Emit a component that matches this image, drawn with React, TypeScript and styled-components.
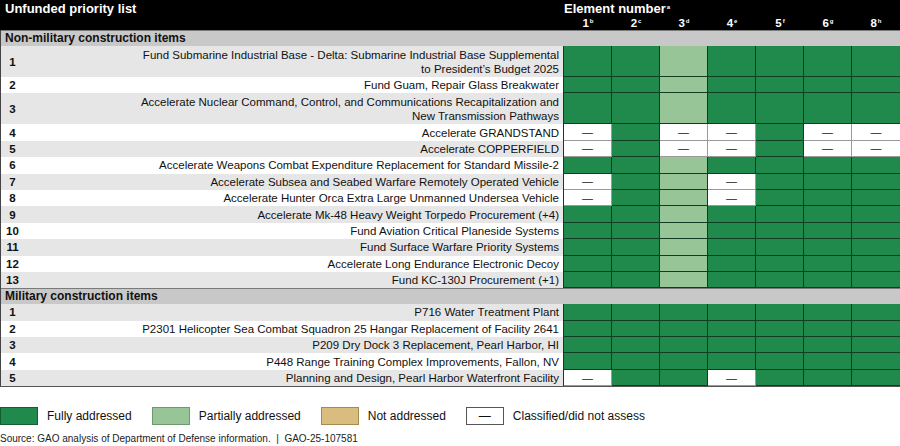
import React from 'react';
import styled, { createGlobalStyle } from 'styled-components';

const Global = createGlobalStyle`
  html, body { margin: 0; padding: 0; background: #fff; }
  body { font-family: "Liberation Sans", Arial, sans-serif; color: #111; }
`;

type Status = 'F' | 'P' | 'N' | 'C';

const FILL: Record<Status, string> = {
  F: '#1f8a4c',
  P: '#98c598',
  N: '#d9bd7f',
  C: '#ffffff',
};
const EDGE: Record<Status, string> = {
  F: '#0f3d22',
  P: '#0f3d22',
  N: '#7a6535',
  C: '#9a9a9a',
};

interface Item {
  n: number;
  text: React.ReactNode;
  tall?: boolean;
  s: string;
}

const nonMil: Item[] = [
  { n: 1, tall: true, s: 'FFPFFFF', text: <>Fund Submarine Industrial Base - Delta: Submarine Industrial Base Supplemental<br />to President’s Budget 2025</> },
  { n: 2, s: 'FFPFFFF', text: 'Fund Guam, Repair Glass Breakwater' },
  { n: 3, tall: true, s: 'FFPFFFF', text: <>Accelerate Nuclear Command, Control, and Communications Recapitalization and<br />New Transmission Pathways</> },
  { n: 4, s: 'CFCCFCC', text: 'Accelerate GRANDSTAND' },
  { n: 5, s: 'CFCCFCC', text: 'Accelerate COPPERFIELD' },
  { n: 6, s: 'FFPFFFF', text: 'Accelerate Weapons Combat Expenditure Replacement for Standard Missile-2' },
  { n: 7, s: 'CFPCFFF', text: 'Accelerate Subsea and Seabed Warfare Remotely Operated Vehicle' },
  { n: 8, s: 'CFPCFFF', text: 'Accelerate Hunter Orca Extra Large Unmanned Undersea Vehicle' },
  { n: 9, s: 'FFPFFFF', text: 'Accelerate Mk-48 Heavy Weight Torpedo Procurement (+4)' },
  { n: 10, s: 'FFPFFFF', text: 'Fund Aviation Critical Planeside Systems' },
  { n: 11, s: 'FFPFFFF', text: 'Fund Surface Warfare Priority Systems' },
  { n: 12, s: 'FFPFFFF', text: 'Accelerate Long Endurance Electronic Decoy' },
  { n: 13, s: 'FFPFFFF', text: 'Fund KC-130J Procurement (+1)' },
];

const mil: Item[] = [
  { n: 1, s: 'FFFFFFF', text: 'P716 Water Treatment Plant' },
  { n: 2, s: 'FFFFFFF', text: 'P2301 Helicopter Sea Combat Squadron 25 Hangar Replacement of Facility 2641' },
  { n: 3, s: 'FFFFFFF', text: 'P209 Dry Dock 3 Replacement, Pearl Harbor, HI' },
  { n: 4, s: 'FFFFFFF', text: 'P448 Range Training Complex Improvements, Fallon, NV' },
  { n: 5, s: 'CFFCFFF', text: 'Planning and Design, Pearl Harbor Waterfront Facility' },
];

const cols: [string, string][] = [
  ['1', 'b'], ['2', 'c'], ['3', 'd'], ['4', 'e'], ['5', 'f'], ['6', 'g'], ['8', 'h'],
];

const Page = styled.div`
  width: 900px;
  height: 446px;
  overflow: hidden;
  display: flex;
  flex-direction: column;
`;

const Table = styled.div`
  display: flex;
  flex-direction: column;
  border-bottom: 1px solid #555;
`;

const HeadBar = styled.div`
  background: #000;
  color: #fff;
  height: 30px;
  display: flex;
`;

const Title = styled.div`
  flex: 1;
  font-weight: bold;
  font-size: 13px;
  line-height: 16px;
  padding: 1px 0 0 5px;
`;

const ElemHead = styled.div`
  width: 336px;
  display: flex;
  flex-direction: column;
`;

const ElemTitle = styled.div`
  font-weight: bold;
  font-size: 13px;
  line-height: 15px;
  height: 16px;
  padding-top: 1px;
`;

const ElemCols = styled.div`
  display: grid;
  grid-template-columns: repeat(7, 48px);
  font-weight: bold;
  font-size: 11.5px;
  line-height: 13px;
  text-align: center;
`;

const Sup = styled.sup`
  font-size: 6px;
  line-height: 0;
  vertical-align: 4px;
  margin-left: 1px;
`;

const Body = styled.div`
  border-left: 1px solid #444;
  display: flex;
  flex-direction: column;
`;

const SectionHead = styled.div`
  box-sizing: border-box;
  height: 16px;
  background: #c8c8c8;
  border-top: 1px solid #7a7a7a;
  font-weight: bold;
  font-size: 12px;
  line-height: 15px;
  padding-left: 4px;
`;

const Row = styled.div<{ $tall?: boolean; $alt: boolean }>`
  display: flex;
  height: ${(p) => (p.$tall ? 31 : 16.4)}px;
  background: ${(p) => (p.$alt ? '#e6e6e6' : '#ffffff')};
`;

const Num = styled.div`
  width: 23px;
  text-align: center;
  font-weight: bold;
  font-size: 11.5px;
  align-self: center;
`;

const Desc = styled.div`
  flex: 1;
  text-align: right;
  padding-right: 4px;
  font-size: 11.5px;
  line-height: 14px;
  align-self: center;
  white-space: nowrap;
`;

const Cells = styled.div`
  display: grid;
  grid-template-columns: repeat(7, 48px);
  border-left: 1px solid #0f3d22;
`;

const Cell = styled.div<{ $s: Status }>`
  box-sizing: border-box;
  background: ${(p) => FILL[p.$s]};
  border-right: 1px solid ${(p) => EDGE[p.$s]};
  border-bottom: 1px solid ${(p) => EDGE[p.$s]};
  display: flex;
  align-items: center;
  justify-content: center;
  font-size: 11px;
  color: #222;
  &:last-child {
    border-right: none;
  }
`;

const Legend = styled.div`
  display: flex;
  align-items: center;
  margin-top: 20px;
  height: 18px;
`;

const LegendItem = styled.div`
  display: flex;
  align-items: center;
  margin-right: 20px;
`;

const Swatch = styled.div<{ $s: Status }>`
  box-sizing: border-box;
  width: 38px;
  height: 18px;
  background: ${(p) => FILL[p.$s]};
  border: 1px solid ${(p) => (p.$s === 'F' ? '#145c33' : p.$s === 'P' ? '#6f9a6f' : p.$s === 'N' ? '#a68a4f' : '#555')};
  display: flex;
  align-items: center;
  justify-content: center;
  font-size: 12px;
`;

const LegendText = styled.span`
  margin-left: 9px;
  font-size: 12px;
`;

const Source = styled.div`
  margin-top: 8px;
  font-size: 10px;
  line-height: 12px;
  color: #222;
`;

function Rows({ items }: { items: Item[] }) {
  return (
    <>
      {items.map((it, i) => (
        <Row key={it.n} $tall={it.tall} $alt={i % 2 === 0}>
          <Num>{it.n}</Num>
          <Desc>{it.text}</Desc>
          <Cells>
            {it.s.split('').map((c, j) => (
              <Cell key={j} $s={c as Status}>{c === 'C' ? '—' : null}</Cell>
            ))}
          </Cells>
        </Row>
      ))}
    </>
  );
}

export default function App() {
  return (
    <Page>
      <Global />
      <Table>
        <HeadBar>
          <Title>Unfunded priority list</Title>
          <ElemHead>
            <ElemTitle>Element number<Sup>a</Sup></ElemTitle>
            <ElemCols>
              {cols.map(([n, s]) => (
                <span key={n}>{n}<Sup>{s}</Sup></span>
              ))}
            </ElemCols>
          </ElemHead>
        </HeadBar>
        <Body>
          <SectionHead>Non-military construction items</SectionHead>
          <Rows items={nonMil} />
          <SectionHead>Military construction items</SectionHead>
          <Rows items={mil} />
        </Body>
      </Table>
      <Legend>
        <LegendItem><Swatch $s="F" /><LegendText>Fully addressed</LegendText></LegendItem>
        <LegendItem><Swatch $s="P" /><LegendText>Partially addressed</LegendText></LegendItem>
        <LegendItem><Swatch $s="N" /><LegendText>Not addressed</LegendText></LegendItem>
        <LegendItem><Swatch $s="C">—</Swatch><LegendText>Classified/did not assess</LegendText></LegendItem>
      </Legend>
      <Source>Source: GAO analysis of Department of Defense information.&nbsp; |&nbsp; GAO-25-107581</Source>
    </Page>
  );
}
